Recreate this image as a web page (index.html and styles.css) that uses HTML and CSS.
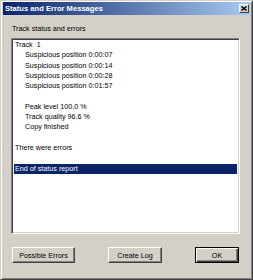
FILE: index.html
```html
<!DOCTYPE html>
<html lang="en">
<head>
  <meta charset="UTF-8" />
  <title>Status and Error Messages</title>
  <link rel="stylesheet" href="styles.css">
</head>
<body>
  <div class="window">
    <div class="titlebar">
      <span class="title">Status and Error Messages</span>
      <span class="close">
        <svg width="6" height="5" viewBox="0 0 6 5">
          <path d="M0.5 0.5 L5.5 4.5 M5.5 0.5 L0.5 4.5" stroke="#000" stroke-width="1.4" fill="none" />
        </svg>
      </span>
    </div>

    <div class="content">
      <div class="caption">Track status and errors</div>

      <div class="listbox">
        <div class="row">Track&nbsp; 1</div>
        <div class="row indent">Suspicious position 0:00:07</div>
        <div class="row indent">Suspicious position 0:00:14</div>
        <div class="row indent">Suspicious position 0:00:28</div>
        <div class="row indent">Suspicious position 0:01:57</div>
        <div class="row"></div>
        <div class="row indent">Peak level 100.0 %</div>
        <div class="row indent">Track quality 96.6 %</div>
        <div class="row indent">Copy finished</div>
        <div class="row"></div>
        <div class="row">There were errors</div>
        <div class="row"></div>
        <div class="row selected">End of status report</div>
      </div>

      <div class="buttons">
        <button class="btn btn-errors">Possible Errors</button>
        <button class="btn btn-log">Create Log</button>
        <button class="btn btn-ok">OK</button>
      </div>
    </div>
  </div>
</body>
</html>
```

FILE: styles.css
```css
body {
  margin: 0;
  background: #d4d0c8;
  font-family: "Liberation Sans", Arial, sans-serif;
  font-size: 7.2px;
  color: #000;
}
.window {
  width: 253px;
  height: 280px;
  box-sizing: border-box;
  background: #d4d0c8;
  border: 1px solid;
  border-color: #d4d0c8 #404040 #404040 #d4d0c8;
  box-shadow: inset 1px 1px #fff, inset -1px -1px #808080;
  padding: 1px 2px;
}
.titlebar {
  height: 13px;
  display: flex;
  align-items: center;
  justify-content: space-between;
  padding: 0 1px 0 2px;
  background: linear-gradient(to right, #0a246a, #a6caf0);
}
.title {
  color: #fff;
  font-weight: bold;
  font-size: 7.6px;
}
.close {
  width: 10px;
  height: 9px;
  box-sizing: border-box;
  background: #d4d0c8;
  border: 1px solid;
  border-color: #fff #404040 #404040 #fff;
  display: flex;
  align-items: center;
  justify-content: center;
}
.content {
  padding: 0 10px 0 8px;
}
.caption {
  margin-top: 9px;
  height: 10px;
  line-height: 10px;
  padding-left: 1px;
}
.listbox {
  margin-top: 4px;
  height: 196px;
  box-sizing: border-box;
  background: #fff;
  border: 1px solid;
  border-color: #808080 #fff #fff #808080;
  box-shadow: inset 1px 1px #404040, inset -1px -1px #d4d0c8;
  padding: 1px 2px;
}
.row {
  height: 10.3px;
  line-height: 10.3px;
  padding-left: 1px;
  white-space: nowrap;
}
.indent {
  padding-left: 11px;
}
.selected {
  background: #0a246a;
  color: #fff;
}
.buttons {
  margin-top: 13px;
  display: flex;
  justify-content: space-between;
  padding: 0 1px;
}
.btn {
  height: 16px;
  box-sizing: border-box;
  padding: 0;
  font-family: inherit;
  font-size: 7.2px;
  color: #000;
  background: #d4d0c8;
  border: 1px solid;
  border-color: #fff #404040 #404040 #fff;
  box-shadow: inset -1px -1px #808080;
}
.btn-errors {
  width: 63px;
}
.btn-log {
  width: 54px;
}
.btn-ok {
  width: 44px;
  border-color: #000;
  box-shadow: inset 1px 1px #fff, inset -1px -1px #404040, inset -2px -2px #808080;
}
```
